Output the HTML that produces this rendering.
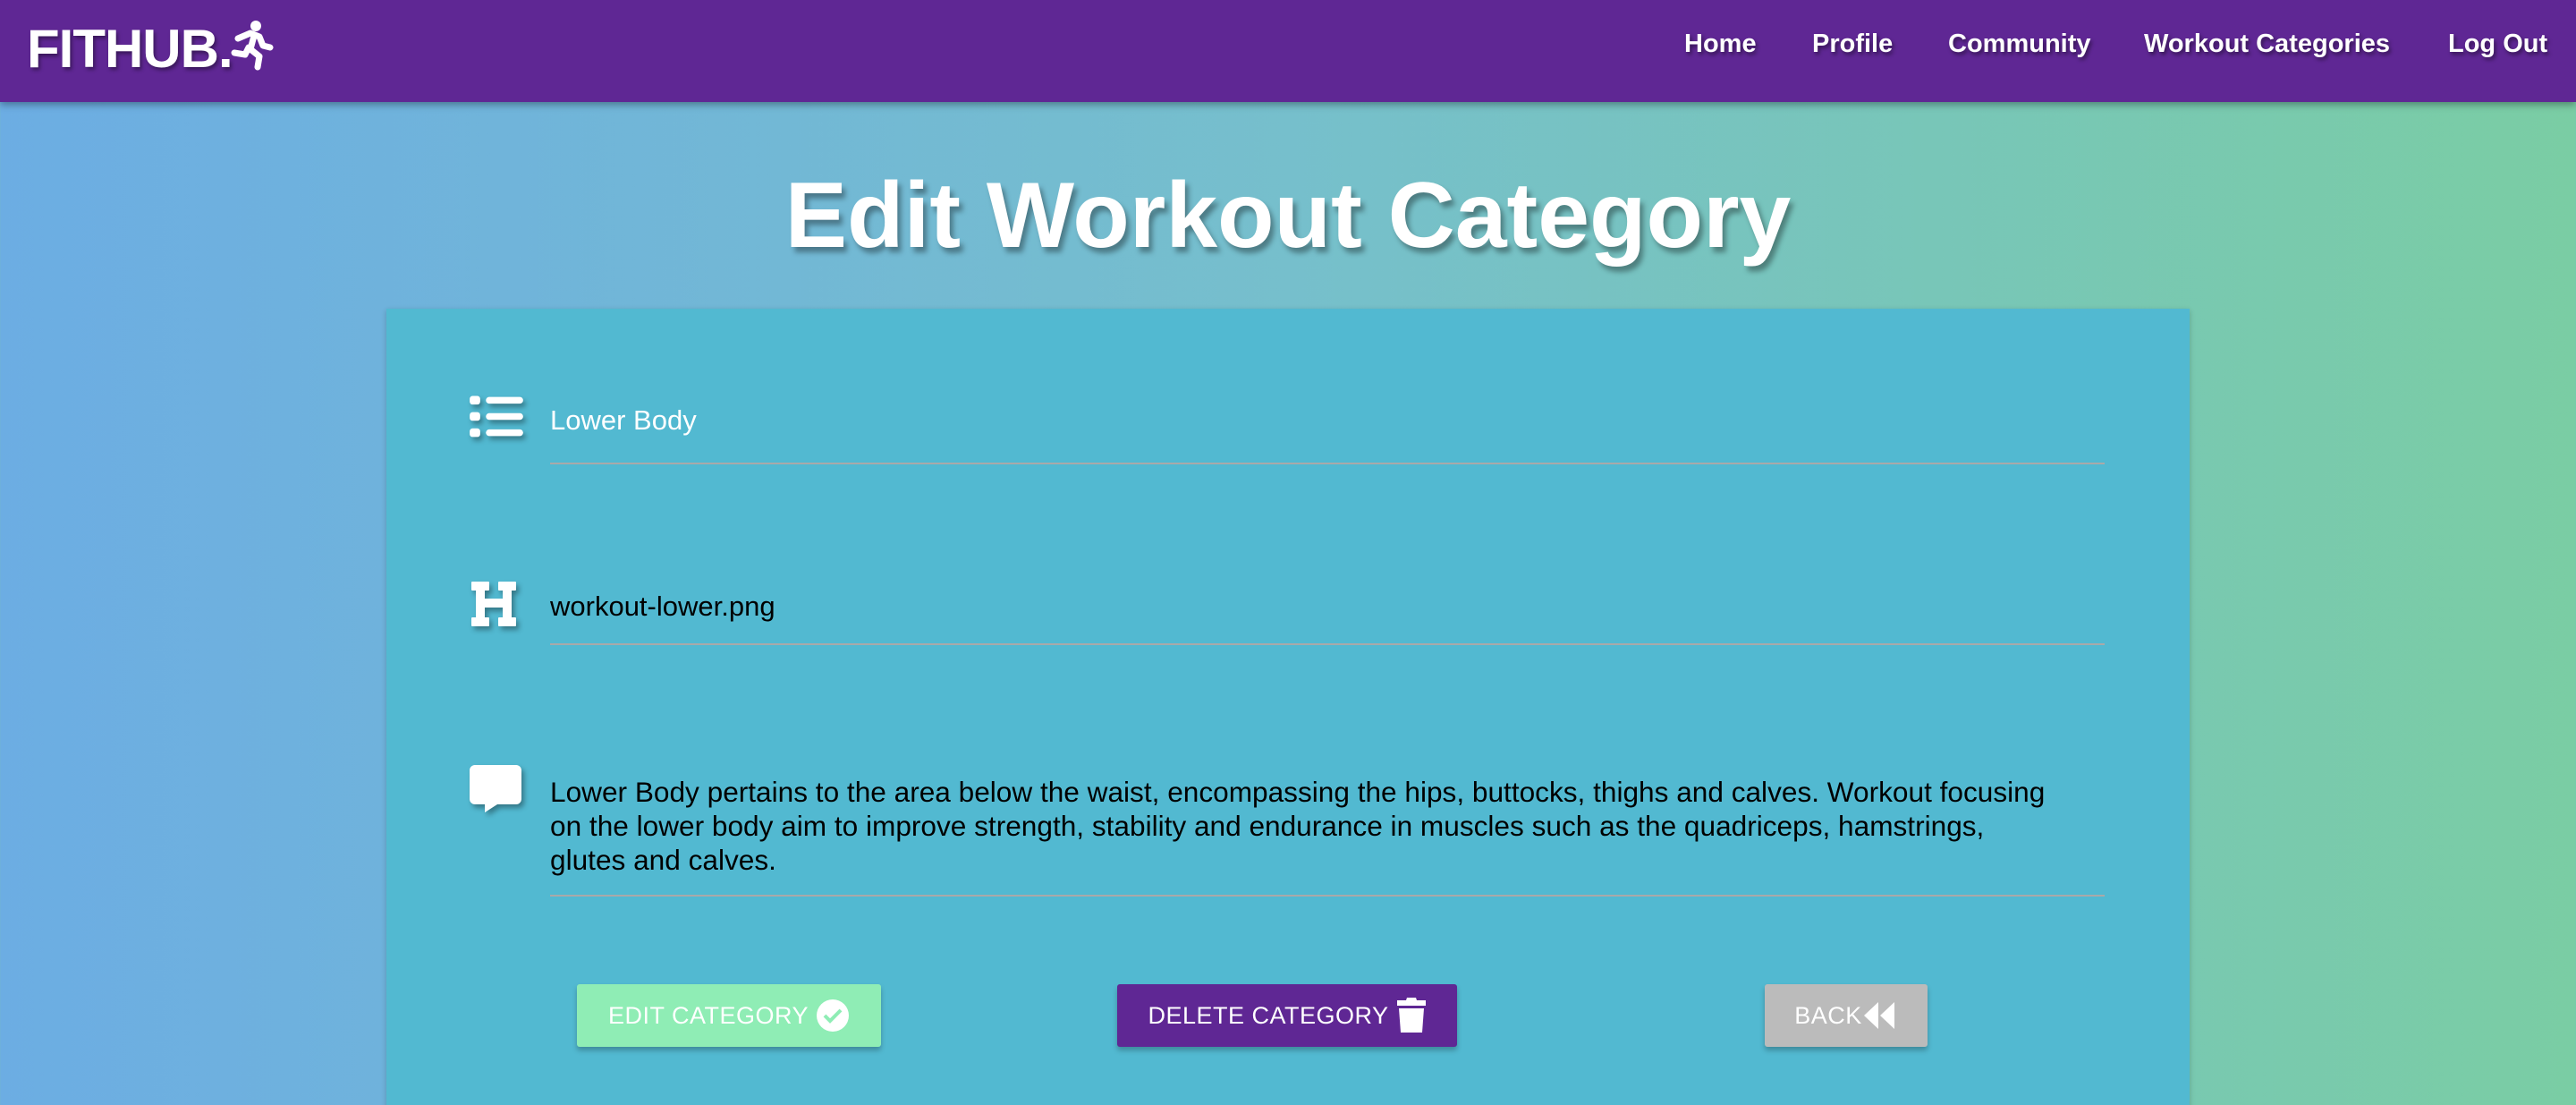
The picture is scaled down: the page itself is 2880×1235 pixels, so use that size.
<!DOCTYPE html>
<html><head><meta charset="utf-8"><style>
*{margin:0;padding:0;box-sizing:border-box}
html,body{width:2880px;height:1235px;overflow:hidden}
body{font-family:"Liberation Sans",sans-serif;background:linear-gradient(90deg,#6cade3 0%,#76bfcc 50%,#7acda4 100%);position:relative}
.nav{position:absolute;left:0;top:0;width:2880px;height:114px;background:#5f2794;box-shadow:0 3px 8px rgba(0,0,0,.35)}
.logo{position:absolute;left:30px;top:20px;font-size:60px;font-weight:bold;color:#fff;text-shadow:2px 3px 4px rgba(0,0,0,.4);letter-spacing:-1px}
.nav a{position:absolute;top:33px;font-size:29px;font-weight:bold;color:#fff;text-decoration:none;text-shadow:2px 3px 4px rgba(0,0,0,.45);white-space:nowrap}
h1{position:absolute;left:0;width:2880px;top:182px;text-align:center;font-size:104px;font-weight:bold;color:#fff;text-shadow:4px 6px 6px rgba(0,0,0,.35)}
.card{position:absolute;left:432px;top:345px;width:2016px;height:900px;background:#52b9d1;box-shadow:0 2px 6px rgba(0,0,0,.2)}
.line{position:absolute;left:615px;width:1738px;height:2px;background:#a9a9a9}
.t{position:absolute;left:615px;font-size:31px;color:#000}
.btn{position:absolute;top:1100px;height:70px;color:#fff;font-size:27px;display:flex;align-items:center;justify-content:center;gap:8px;border-radius:3px;box-shadow:0 4px 6px rgba(0,0,0,.25);letter-spacing:.5px}
svg.i{position:absolute;filter:drop-shadow(3px 4px 3px rgba(0,0,0,.35))}
</style></head><body>
<div class="nav">
<div class="logo">FITHUB.<svg width="50" height="56" viewBox="0 0 50 56" style="vertical-align:-4px;margin-left:-4px"><circle cx="30" cy="6" r="6" fill="#fff"/><path d="M10 20 L24 14 L34 18 L38 28 L46 30" stroke="#fff" stroke-width="7" fill="none" stroke-linecap="round" stroke-linejoin="round"/><path d="M28 17 L24 32 L34 40 L32 52" stroke="#fff" stroke-width="7" fill="none" stroke-linecap="round" stroke-linejoin="round"/><path d="M22 30 L18 38 L6 36" stroke="#fff" stroke-width="7" fill="none" stroke-linecap="round" stroke-linejoin="round"/></svg></div>
<a style="left:1883px">Home</a>
<a style="left:2026px">Profile</a>
<a style="left:2178px">Community</a>
<a style="left:2397px">Workout Categories</a>
<a style="left:2737px">Log Out</a>
</div>
<h1>Edit Workout Category</h1>
<div class="card"></div>
<svg class="i" style="left:523px;top:440px" width="64" height="52" viewBox="0 0 60 48"><rect x="2" y="2" width="11" height="9" rx="3" fill="#fff"/><rect x="2" y="19" width="11" height="9" rx="3" fill="#fff"/><rect x="2" y="36" width="11" height="9" rx="3" fill="#fff"/><rect x="19" y="3" width="39" height="7" rx="3.5" fill="#fff"/><rect x="19" y="20" width="39" height="7" rx="3.5" fill="#fff"/><rect x="19" y="37" width="39" height="7" rx="3.5" fill="#fff"/></svg>
<div class="t" style="top:452px;color:#fff">Lower Body</div>
<div class="line" style="top:517px"></div>
<svg class="i" style="left:524px;top:648px" width="56" height="54" viewBox="0 0 56 52"><path d="M4 2h18v8h-5v11h22V10h-5V2h18v8h-5v32h5v8H34v-8h5V29H17v13h5v8H4v-8h5V10H4z" fill="#fff" stroke="#fff" stroke-width="2" stroke-linejoin="round"/></svg>
<div class="t" style="top:660px">workout-lower.png</div>
<div class="line" style="top:719px"></div>
<svg class="i" style="left:524px;top:853px" width="62" height="60" viewBox="0 0 62 58"><path d="M7 1h46a6 6 0 0 1 6 6v32a6 6 0 0 1-6 6H32l-14 9v-9H7a6 6 0 0 1-6-6V7a6 6 0 0 1 6-6z" fill="#fff"/></svg>
<div class="t" style="top:866px;line-height:38px;font-size:31.6px">Lower Body pertains to the area below the waist, encompassing the hips, buttocks, thighs and calves. Workout focusing<br>on the lower body aim to improve strength, stability and endurance in muscles such as the quadriceps, hamstrings,<br>glutes and calves.</div>
<div class="line" style="top:1000px"></div>
<div class="btn" style="left:645px;width:340px;background:#8fedb5">EDIT CATEGORY <svg width="38" height="38" viewBox="0 0 38 38"><circle cx="19" cy="19" r="18" fill="#fff"/><path d="M10 19l6 6 12-12" stroke="#8fedb5" stroke-width="4" fill="none"/></svg></div>
<div class="btn" style="left:1249px;width:380px;background:#5f2794">DELETE CATEGORY <svg width="34" height="42" viewBox="0 0 34 42"><path d="M12 1h10l1 3h10v6H1V4h10z" fill="#fff"/><path d="M3 13h28l-2 27H5z" fill="#fff"/></svg></div>
<div class="btn" style="left:1973px;width:182px;background:#bbbbbb;gap:0">BACK<svg width="40" height="34" viewBox="0 0 40 34"><path d="M2 17L18 2v30z M20 17L36 2v30z" fill="#fff"/></svg></div>
</body></html>
